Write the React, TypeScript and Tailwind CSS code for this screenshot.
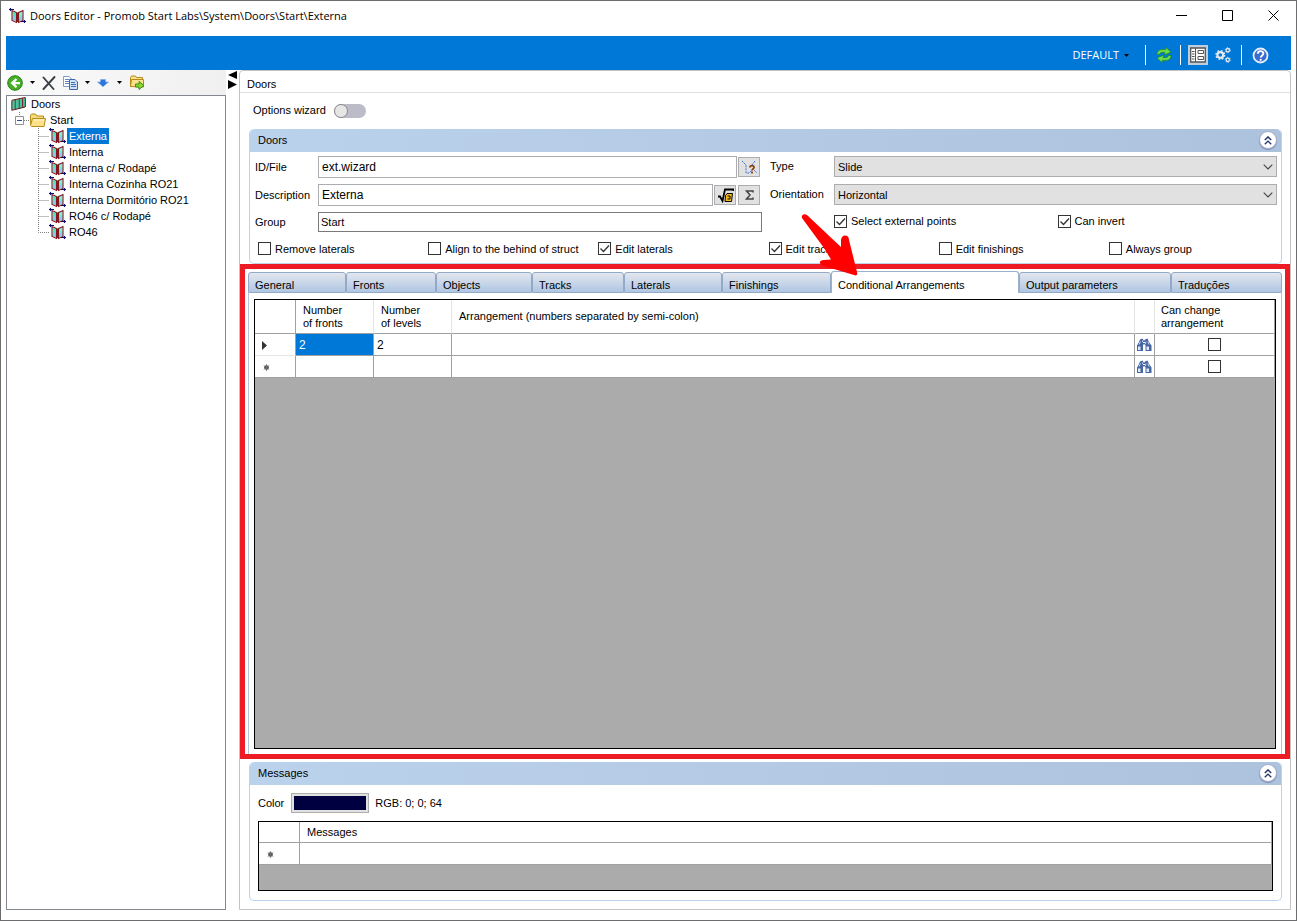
import React from "react";

const UI = "font-['Liberation_Sans',Arial,sans-serif]";
const SEGOE = "font-['Open_Sans','Noto_Sans',sans-serif]";

function DoorIcon() {
  return (
    <svg width="18" height="16" viewBox="0 0 18 16" className="shrink-0" aria-hidden="true">
      <path d="M3.500 3l4 1v9.500l-4-1.500z" fill="#52e8c4" />
      <path d="M9.500 4l4-1.500v9.500l-4 1.500z" fill="#7af0d6" />
      <path d="M3.500 10l4-3v6.500l-4-1.500zM9.500 11l4-4v5l-4 1.500z" fill="#8cc9ee" />
      <path d="M3 2.500v10l4.500 2V4.500zM9.500 4.500l4.500-2v10l-4.500 2z" fill="none" stroke="#84181c" strokeWidth="1.100" />
      <path d="M8.500 4.500v9.500" stroke="#84181c" strokeWidth="1.800" />
      <path d="M0 1.500h5M1.500 0v3" stroke="#101078" strokeWidth="1.200" />
      <path d="M12 13.500h5M15.500 12v3" stroke="#101078" strokeWidth="1.200" />
    </svg>
  );
}

function DoorsGroupIcon() {
  return (
    <svg width="15" height="14" viewBox="0 0 15 14" className="shrink-0" aria-hidden="true">
      <path d="M1 3.500L4 2.500V12L1 13.300zM5 2.800l3-1v9.500l-3 1.300zM9 2.100l2.500-1v9.500l-2.500 1.200zM12 1.500l2.300-1V10L12 11z" fill="#48c4a0" />
      <path d="M.8 3.500v9.800M4.300 2.500v9.900M8.300 1.900v9.800M11.600 1.200v9.500M14.400.5V10M.8 3.300L14 .5M.8 13.300L14 10" fill="none" stroke="#6e1a1a" strokeWidth="1" />
    </svg>
  );
}

function FolderIcon() {
  return (
    <svg width="16" height="14" viewBox="0 0 16 14" className="shrink-0" aria-hidden="true">
      <path d="M.5 11.500V2.500l1-1.500h4l1.500 2h6.500v3" fill="#f5da7c" stroke="#b58a1a" />
      <path d="M.5 12.500l2-7h13l-1.500 8H1.500z" fill="#fbe28a" stroke="#b58a1a" />
      <path d="M3.500 7h10.500" stroke="#fff6cf" />
    </svg>
  );
}

function Caret({ className }: { className: string }) {
  return (
    <svg width="5" height="3" viewBox="0 0 5 3" className={className} aria-hidden="true">
      <path d="M0 0h5L2.500 3z" fill="#000" />
    </svg>
  );
}

function Binoculars() {
  return (
    <svg width="16" height="14" viewBox="0 0 16 14" aria-hidden="true">
      <path d="M4 1.500L6.500.500 8 3v3l-1 1v6H1V7.500L3 4z" fill="#4666a4" />
      <path d="M9 1.500l2.500-1L13 4l2.500 3.500V13H9.500V7L8 6V3z" fill="#4666a4" />
      <path d="M2 8.500h2.500v3.500H2zM10.500 8.500H13v3.500h-2.500z" fill="#dfe9fa" />
      <path d="M4.500 3.500L3 6.500M6.500 2.500v1.500M10 3.500L9.500 6M12 3.500l1 3" stroke="#c8d8f2" />
      <path d="M7 4.500h2" stroke="#fff" />
    </svg>
  );
}

function Tick({ checked = false, name }: { checked?: boolean; name?: string }) {
  return (
    <span className="relative block size-[13px] shrink-0">
      <input type="checkbox" defaultChecked={checked} aria-label={name} className="peer block size-[13px] appearance-none border border-[#333] bg-white" />
      <svg width="13" height="13" viewBox="0 0 13 13" className="pointer-events-none absolute inset-0 hidden peer-checked:block" aria-hidden="true">
        <path d="M2.500 6.500l3 3 5.500-6" fill="none" stroke="#333" strokeWidth="1.300" />
      </svg>
    </span>
  );
}

function CheckBox({ label, checked = false }: { label: string; checked?: boolean }) {
  return (
    <label className="flex items-center gap-1 leading-4 whitespace-nowrap">
      <Tick checked={checked} />
      <span>{label}</span>
    </label>
  );
}

function SelectBox({ id, value }: { id: string; value: string }) {
  return (
    <span className="relative block h-[21px] min-w-0 flex-1">
      <select id={id} defaultValue={value} className="block h-full w-full appearance-none border border-[#adadad] bg-[#e1e1e1] pl-[3px]">
        <option>{value}</option>
      </select>
      <svg width="10" height="6" viewBox="0 0 10 6" className="pointer-events-none absolute top-2 right-1" aria-hidden="true">
        <path d="M.7.700L5 5 9.300.700" fill="none" stroke="#444" strokeWidth="1.100" />
      </svg>
    </span>
  );
}

function SectionHeader({ title }: { title: string }) {
  return (
    <header className="flex h-[23px] items-center justify-between rounded-t-[5px] bg-linear-to-r from-[#bbd2ec] to-[#adc2dd] pr-1 pb-px pl-2">
      <h2>{title}</h2>
      <button type="button" aria-label={`Collapse ${title}`} className="flex size-[18px] items-center justify-center rounded-full border border-[#a3aecb] bg-white shadow-[0_1px_1px_#7f8db0]">
        <svg width="8" height="9" viewBox="0 0 8 9" aria-hidden="true">
          <path d="M.8 4L4 .9 7.200 4M.8 8.200L4 5.100l3.200 3.100" fill="none" stroke="#1f3467" strokeWidth="1.400" />
        </svg>
      </button>
    </header>
  );
}

const styles = ["Externa", "Interna", "Interna c/ Rodapé", "Interna Cozinha RO21", "Interna Dormitório RO21", "RO46 c/ Rodapé", "RO46"];

const tabs = [
  { label: "General", size: "basis-[98px]" },
  { label: "Fronts", size: "basis-[90px]" },
  { label: "Objects", size: "basis-[96px]" },
  { label: "Tracks", size: "basis-[92px]" },
  { label: "Laterals", size: "basis-[98px]" },
  { label: "Finishings", size: "basis-[109px]" },
  { label: "Conditional Arrangements", size: "basis-[188px]" },
  { label: "Output parameters", size: "basis-[152px]" },
  { label: "Traduções", size: "basis-[111px]" },
];

function TitleBar() {
  return (
    <header className={`flex h-[35px] items-start text-[11px] ${SEGOE}`}>
      <div className="flex min-w-0 flex-1 items-center gap-[3px] pt-1.5 pl-2">
        <DoorIcon />
        <h1 className="truncate leading-[18px]">Doors Editor - Promob Start Labs\System\Doors\Start\Externa</h1>
      </div>
      <button type="button" aria-label="Minimize" className="flex h-7 w-[46px] items-center justify-center">
        <svg width="11" height="11" viewBox="0 0 11 11"><path d="M0 5.500h11" stroke="#000" /></svg>
      </button>
      <button type="button" aria-label="Maximize" className="flex h-7 w-[46px] items-center justify-center">
        <svg width="11" height="11" viewBox="0 0 11 11"><path d="M.5.500h10v10H.5z" fill="none" stroke="#000" /></svg>
      </button>
      <button type="button" aria-label="Close" className="flex h-7 w-[46px] items-center justify-center">
        <svg width="11" height="11" viewBox="0 0 11 11"><path d="M.5.500l10 10M10.500.500l-10 10" stroke="#000" /></svg>
      </button>
    </header>
  );
}

function Gear({ cx, cy, r, teeth }: { cx: number; cy: number; r: number; teeth: number }) {
  const outer = r * 1.5;
  const step = (Math.PI * 2 * outer) / (teeth * 2);
  return (
    <g fill="none" stroke="#e3e9f0">
      <circle cx={cx} cy={cy} r={r} strokeWidth={r * 0.75} />
      <circle cx={cx} cy={cy} r={outer} strokeWidth={r * 0.5} strokeDasharray={`${step} ${step}`} />
    </g>
  );
}

function Ribbon() {
  return (
    <div className="flex h-[34px] items-center justify-end bg-[#0078d7] pt-1 pr-[22px]">
      <button type="button" className={`flex items-center text-[11px] leading-4 text-white ${SEGOE}`}>
        DEFAULT
        <Caret className="mr-4 ml-[5px]" />
      </button>
      <span className="h-5 w-px bg-white" />
      <button type="button" aria-label="Refresh" className="mr-2 ml-2.5">
        <svg width="16" height="16" viewBox="0 0 16 16">
          <path d="M1 7.500C1 3.500 4.500 1.800 9.500 2.800L10 .5l5 4.500-6.500 3 .5-2.500C6 4.800 4 5.500 3.500 7.500z" fill="#6fdc4c" stroke="#1f8a22" strokeWidth=".8" />
          <path d="M15 8.500c0 4-3.500 5.700-8.500 4.700L6 15.500 1 11l6.500-3-.5 2.500c3 .7 5 0 5.500-2z" fill="#6fdc4c" stroke="#1f8a22" strokeWidth=".8" />
        </svg>
      </button>
      <span className="h-5 w-px bg-white" />
      <button type="button" aria-label="Properties" className="mr-[7px] ml-[7px] flex size-5 items-center justify-center bg-[#c0cddb]">
        <svg width="16" height="16" viewBox="0 0 16 16">
          <path d="M.7 1h14.600v14H.7z" fill="#fff" stroke="#555" strokeWidth="1.300" />
          <path d="M5.500 1v14" stroke="#555" />
          <path d="M2 4.500h2.500M2 7h2.500M2 9.500h2.500M2 12h2.500" stroke="#555" />
          <path d="M8 3.500h5.500v3H8zM8 9.500h5.500v3H8z" fill="#fff" stroke="#555" />
        </svg>
      </button>
      <button type="button" aria-label="Settings" className="mr-2.5">
        <svg width="16" height="16" viewBox="0 0 16 16">
          <Gear cx={5.3} cy={8} r={2.9} teeth={8} />
          <Gear cx={12.8} cy={3.2} r={1.7} teeth={6} />
          <Gear cx={12.8} cy={12.8} r={1.7} teeth={6} />
        </svg>
      </button>
      <span className="h-5 w-px bg-white" />
      <button type="button" aria-label="Help" className="ml-2.5">
        <svg width="17" height="17" viewBox="0 0 17 17">
          <circle cx="8.500" cy="8.500" r="7" fill="#3c6bd0" stroke="#e6ecf8" strokeWidth="1.800" />
          <path d="M5.800 6.800c0-3.600 5.600-3.500 5.600-.2 0 1.900-2.700 1.900-2.700 4" fill="none" stroke="#fff" strokeWidth="1.900" />
          <circle cx="8.700" cy="12.800" r="1.100" fill="#fff" />
        </svg>
      </button>
    </div>
  );
}

function Sidebar() {
  return (
    <aside className="flex w-[220px] shrink-0 flex-col">
      <div className="flex h-[25px] items-center bg-linear-to-r from-[#fafafa] to-[#f0f0f0] pl-[1px]">
        <button type="button" aria-label="Back">
          <svg width="16" height="16" viewBox="0 0 16 16">
            <circle cx="8" cy="8" r="7.300" fill="#45b025" stroke="#2b7d18" />
            <path d="M13 7v2.200H8.200l2 2.300-1.500 1.400L3.500 8.100l5.200-4.800 1.500 1.400L8.200 7z" fill="#fff" />
          </svg>
        </button>
        <Caret className="mr-[7px] ml-[7px]" />
        <button type="button" aria-label="Delete">
          <svg width="14" height="14" viewBox="0 0 14 14">
            <path d="M1.500 1.500l10 11.500M12.500 1L1.500 13" stroke="#3b3f48" strokeWidth="1.900" strokeLinecap="round" />
          </svg>
        </button>
        <button type="button" aria-label="Copy" className="ml-[7px]">
          <svg width="15" height="14" viewBox="0 0 15 14">
            <path d="M.5.500h5.500L8.500 3v7.500h-8z" fill="#fff" stroke="#7f9fc9" />
            <path d="M2 3.500h4M2 5.500h4M2 7.500h4" stroke="#5b87c4" />
            <path d="M6.500 3.500H12L14.500 6v7.500h-8z" fill="#cfe0f7" stroke="#44689f" />
            <path d="M8 6.500h4M8 8.500h5M8 10.500h5" stroke="#3f6fb5" />
          </svg>
        </button>
        <Caret className="mr-[7px] ml-[7px]" />
        <button type="button" aria-label="Move down">
          <svg width="12" height="8" viewBox="0 0 12 8">
            <path d="M3.500.5h5v2.500h3L6 7.800.5 3h3z" fill="#2f74dd" stroke="#7ba9e8" strokeWidth=".6" />
          </svg>
        </button>
        <Caret className="mr-[7px] ml-2" />
        <button type="button" aria-label="Move to folder">
          <svg width="16" height="15" viewBox="0 0 16 15">
            <path d="M1.500 11.500v-9L2.500 1h4l1 1.500h6v2M1.500 11.500l1-7h12v7.500z" fill="#fbe28a" stroke="#b58a1a" />
            <path d="M6.500 9H10V6.500l5 4-5 4V12H6.500z" fill="#8bd62e" stroke="#3d8a1a" />
          </svg>
        </button>
      </div>
      <nav aria-label="Doors" className="flex-1 border border-[#828790] text-[11px] leading-4">
        <div className="flex h-4 items-center gap-[5px] pl-1">
          <DoorsGroupIcon />
          <span>Doors</span>
        </div>
        <div className="flex h-4 items-center pl-2">
          <svg width="15" height="16" viewBox="0 0 15 16" className="shrink-0" aria-hidden="true">
            <path d="M4.500 0v4M9 8.500h6" stroke="#808080" strokeDasharray="1 1" />
            <path d="M.5 4.500h8v8h-8z" fill="#fff" stroke="#919191" />
            <path d="M2 8.500h5" stroke="#2f4f8f" />
          </svg>
          <FolderIcon />
          <span className="ml-1">Start</span>
        </div>
        <ul className="pl-[31px]">
          {styles.map((name, i) => (
            <li key={name} className="flex h-4 items-center">
              <svg width="11" height="16" viewBox="0 0 11 16" className="shrink-0" aria-hidden="true">
                <path d={i === styles.length - 1 ? "M.5 0v8.500H11" : "M.5 0v16M.5 8.500H11"} fill="none" stroke="#808080" strokeDasharray="1 1" />
              </svg>
              <DoorIcon />
              <a href="#" className={i === 0 ? "bg-[#0078d7] px-0.5 text-white" : "px-0.5"}>{name}</a>
            </li>
          ))}
        </ul>
      </nav>
    </aside>
  );
}

const field = "h-[22px] min-w-0 flex-1 border border-[#abadb3] bg-white px-[3px] text-[12px]";
const iconButton = "flex h-5 w-[22px] shrink-0 items-center justify-center border border-[#adadad] bg-[#e1e1e1]";

function DoorForm() {
  return (
    <section className="mr-2 ml-[9px] rounded-[5px] border border-t-0 border-[#bcd3ee]">
      <SectionHeader title="Doors" />
      <div className="grid grid-cols-2 gap-x-2 gap-y-1.5 pt-1 pr-1 pl-[5px]">
        <div className="flex h-[22px] items-center">
          <label htmlFor="file" className="w-[63px] shrink-0">ID/File</label>
          <input id="file" defaultValue="ext.wizard" className={field} />
          <button type="button" aria-label="Pick points" className={`mr-0.5 ml-px ${iconButton}`}>
            <svg width="17" height="15" viewBox="0 0 17 15">
              <path d="M1 1l4 4v8h3l4-4 4 4M11 5l3-4" fill="none" stroke="#3b6fd8" strokeDasharray="2 1" />
              <path d="M9 7.500c0-2.500 4-2.500 4 0 0 1.300-2 1.500-2 3M11 11.500v2" fill="none" stroke="#8a4410" strokeWidth="1.800" />
            </svg>
          </button>
        </div>
        <div className="flex h-[22px] items-start">
          <label htmlFor="type" className="w-16 shrink-0 leading-5">Type</label>
          <SelectBox id="type" value="Slide" />
        </div>
        <div className="flex h-[22px] items-center">
          <label htmlFor="description" className="w-[63px] shrink-0">Description</label>
          <input id="description" defaultValue="Externa" className={field} />
          <button type="button" aria-label="Formula" className={`mr-0.5 ml-px ${iconButton}`}>
            <svg width="17" height="15" viewBox="0 0 17 15">
              <path d="M1 8.500h2l2.500 4.500L8 1.500h8.500V3" fill="none" stroke="#000" strokeWidth="1.800" />
              <path d="M8.500 7.500l1.500-2h5.500l-1 8H8z" fill="#f8b91c" stroke="#000" />
              <path d="M10.500 8h2.500v3h-2.500" fill="none" stroke="#000" />
            </svg>
          </button>
          <button type="button" aria-label="Sum" className={`mr-0.5 ${iconButton}`}>
            <svg width="9" height="10" viewBox="0 0 9 10">
              <path d="M8 2.500V1H1.500L5 5 1.500 9H8V7.500" fill="none" stroke="#444" strokeWidth="1.500" />
            </svg>
          </button>
        </div>
        <div className="flex h-[22px] items-start">
          <label htmlFor="orientation" className="w-16 shrink-0 leading-5">Orientation</label>
          <SelectBox id="orientation" value="Horizontal" />
        </div>
        <div className="flex h-5 items-center">
          <label htmlFor="group" className="w-[63px] shrink-0">Group</label>
          <input id="group" defaultValue="Start" className="h-5 min-w-0 flex-1 border border-[#7a7a7a] bg-white px-0.5" />
        </div>
        <div className="grid h-[18px] grid-cols-2 items-center gap-1 pl-16">
          <CheckBox label="Select external points" checked />
          <CheckBox label="Can invert" checked />
        </div>
      </div>
      <div className="grid h-[31px] grid-cols-6 items-center pt-0.5 pr-0.5 pl-2">
        <CheckBox label="Remove laterals" />
        <CheckBox label="Align to the behind of struct" />
        <CheckBox label="Edit laterals" checked />
        <CheckBox label="Edit tracks" checked />
        <CheckBox label="Edit finishings" />
        <CheckBox label="Always group" />
      </div>
    </section>
  );
}

const cell = "border-r border-b border-[#a0a0a0] p-0 font-normal";
const NewRow = () => (
  <svg width="7" height="7" viewBox="0 0 7 7" aria-label="New row" className="mt-0.5 ml-2">
    <circle cx="3.500" cy="3.500" r="2.300" fill="#444" />
    <path d="M3.500 0v7M.7 1.500l5.600 4M6.300 1.500l-5.600 4" stroke="#777" strokeWidth=".8" />
  </svg>
);

function Arrangements() {
  return (
    <section className="relative flex min-h-0 flex-1 flex-col border-5 border-[#ed1c24] pt-0.5">
      <div role="tablist" className="flex h-[22px] items-end pr-[3px] pl-[3px]">
        {tabs.map((tab) => {
          const active = tab.label === "Conditional Arrangements";
          return (
            <button
              key={tab.label}
              type="button"
              role="tab"
              aria-selected={active}
              className={`grow ${tab.size} ${
                active
                  ? "h-[22px] rounded-t-[3px] border border-b-0 border-[#9ab0cc] bg-white px-1.5 pt-1 text-left whitespace-nowrap"
                  : "h-[21px] rounded-t-[3px] border border-[#92a9c8] bg-linear-to-b from-[#e3e7ee] to-[#b0c6e2] px-1.5 pt-1 text-left whitespace-nowrap"
              }`}
            >
              {tab.label}
            </button>
          );
        })}
      </div>
      <div className="mr-[3px] ml-[3px] flex flex-1 flex-col border-x border-[#b3c4da] px-[5px] pt-[6px] pb-[5px]">
        <div className="flex-1 border border-black bg-[#ababab]">
          <table className="w-full table-fixed border-separate border-spacing-0 bg-white text-left">
            <colgroup>
              <col className="w-[41px]" />
              <col className="w-[78px]" />
              <col className="w-[78px]" />
              <col />
              <col className="w-5" />
              <col className="w-[120px]" />
            </colgroup>
            <thead>
              <tr className="h-[34px] leading-[13px]">
                <th className={cell} />
                <th className={`${cell} border-r-[#e5e5e5] pl-[7px]`}>Number<br />of fronts</th>
                <th className={`${cell} border-r-[#e5e5e5] pl-[7px]`}>Number<br />of levels</th>
                <th className={`${cell} border-r-[#e5e5e5] pl-[7px]`}>Arrangement (numbers separated by semi-colon)</th>
                <th className={`${cell} border-r-[#e5e5e5]`} />
                <th className={`${cell} pl-1.5`}>Can change<br />arrangement</th>
              </tr>
            </thead>
            <tbody>
              <tr className="h-[22px]">
                <td className={`${cell} border-b-[#e5e5e5]`}>
                  <svg width="5" height="9" viewBox="0 0 5 9" className="mt-0.5 ml-[7px]" aria-label="Current row"><path d="M0 0l5 4.500L0 9z" fill="#333" /></svg>
                </td>
                <td className={`${cell} bg-[#0078d7] pl-[3px] text-[12px] text-white`}>2</td>
                <td className={`${cell} pl-[3px] text-[12px]`}>2</td>
                <td className={cell} />
                <td className={cell}><button type="button" aria-label="Find arrangement for row 1" className="ml-px block"><Binoculars /></button></td>
                <td className={cell}><div className="flex justify-center"><Tick name="Can change arrangement, row 1" /></div></td>
              </tr>
              <tr className="h-[22px]">
                <td className={cell}><NewRow /></td>
                <td className={cell} />
                <td className={cell} />
                <td className={cell} />
                <td className={cell}><button type="button" aria-label="Find arrangement for new row" className="ml-px block"><Binoculars /></button></td>
                <td className={cell}><div className="flex justify-center"><Tick name="Can change arrangement, new row" /></div></td>
              </tr>
            </tbody>
          </table>
        </div>
      </div>
      <svg width="60" height="66" viewBox="0 0 60 66" className="pointer-events-none absolute -top-[56px] left-[555px]" aria-hidden="true">
        <path d="M2 5C1 2 4 0 7 2l27 25.500 7 6.500V28c0-7 8-7 8-1l8 32c1 3-1 4-3 3L24 53c-6-2-5-6 0-6l7-.500L24 35z" fill="#f00" />
      </svg>
    </section>
  );
}

function Messages() {
  return (
    <section className="mt-[3px] mr-2 mb-2 ml-[9px] rounded-[5px] border border-t-0 border-[#bcd3ee]">
      <SectionHeader title="Messages" />
      <div className="flex h-9 items-center pl-2">
        <label htmlFor="color">Color</label>
        <button id="color" type="button" aria-label="Color" className="mr-1.5 ml-[7px] h-5 w-[78px] border border-[#adadad] bg-[#e1e1e1] p-0.5">
          <span className="block h-full bg-[#000040]" />
        </button>
        <span>RGB: 0; 0; 64</span>
      </div>
      <div className="mx-2 mb-[9px] h-[70px] border border-black bg-[#ababab]">
        <table className="w-full table-fixed border-separate border-spacing-0 bg-white text-left">
          <colgroup>
            <col className="w-[41px]" />
            <col />
          </colgroup>
          <thead>
            <tr className="h-[21px]">
              <th className={cell} />
              <th className={`${cell} pl-[7px]`}>Messages</th>
            </tr>
          </thead>
          <tbody>
            <tr className="h-[22px]">
              <td className={cell}><NewRow /></td>
              <td className={cell} />
            </tr>
          </tbody>
        </table>
      </div>
    </section>
  );
}

export default function App() {
  return (
    <div className={`flex min-h-screen flex-col border border-[#6d6d70] bg-white text-[11px] leading-4 text-black ${UI}`}>
      <TitleBar />
      <div className="flex flex-1 flex-col px-[5px] pb-2.5">
        <Ribbon />
        <div className="flex flex-1">
          <Sidebar />
          <div className="w-[13px] shrink-0 pt-px pl-0.5">
            <svg width="9" height="18" viewBox="0 0 9 18" aria-hidden="true">
              <path d="M9 0v8L0 4zM0 9l9 4.500L0 18z" fill="#000" />
            </svg>
          </div>
          <main className="flex min-w-0 flex-1 flex-col rounded-tl-[4px] rounded-tr-[4px] border border-[#c3c3c3]">
            <h2 className="flex h-[22px] items-center border-b border-[#e0e0e0] pt-1 pl-[7px]">Doors</h2>
            <div className="flex h-9 items-center gap-2 pl-[13px]">
              <label htmlFor="wizard" className="pb-0.5">Options wizard</label>
              <input id="wizard" type="checkbox" role="switch" className="h-3.5 w-8 appearance-none rounded-full bg-[#bcbcc8] before:block before:size-3.5 before:rounded-full before:border before:border-[#8a8a8a] before:bg-[#e6e6e6]" />
            </div>
            <DoorForm />
            <Arrangements />
            <Messages />
          </main>
        </div>
      </div>
    </div>
  );
}
